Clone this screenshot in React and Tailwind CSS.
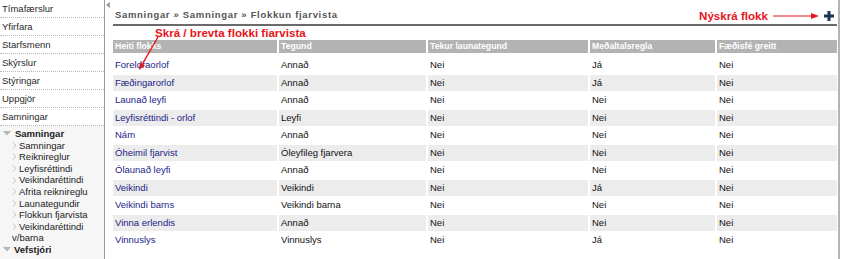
import React from "react";

const rows = [
  ["Foreldraorlof", "Annað", "Nei", "Já", "Nei"],
  ["Fæðingarorlof", "Annað", "Nei", "Já", "Nei"],
  ["Launað leyfi", "Annað", "Nei", "Nei", "Nei"],
  ["Leyfisréttindi - orlof", "Leyfi", "Nei", "Nei", "Nei"],
  ["Nám", "Annað", "Nei", "Nei", "Nei"],
  ["Óheimil fjarvist", "Óleyfileg fjarvera", "Nei", "Nei", "Nei"],
  ["Ólaunað leyfi", "Annað", "Nei", "Nei", "Nei"],
  ["Veikindi", "Veikindi", "Nei", "Já", "Nei"],
  ["Veikindi barns", "Veikindi barna", "Nei", "Nei", "Nei"],
  ["Vinna erlendis", "Annað", "Nei", "Nei", "Nei"],
  ["Vinnuslys", "Vinnuslys", "Nei", "Já", "Nei"],
];

const headers = ["Heiti flokks", "Tegund", "Tekur launategund", "Meðaltalsregla", "Fæðisfé greitt"];

const topItems = ["Tímafærslur", "Yfirfara", "Starfsmenn", "Skýrslur", "Stýringar", "Uppgjör", "Samningar"];
const children = [
  "Samningar",
  "Reiknireglur",
  "Leyfisréttindi",
  "Veikindaréttindi",
  "Afrita reiknireglu",
  "Launategundir",
  "Flokkun fjarvista",
  "Veikindaréttindi",
];

function Tri() {
  return (
    <svg width="8" height="5" viewBox="0 0 8 5" className="shrink-0">
      <polygon points="0,0 8,0 4,4.5" fill="#b5b5b5" />
    </svg>
  );
}

function Chev() {
  return (
    <svg width="5" height="7" viewBox="0 0 5 7" className="shrink-0">
      <polyline points="0.8,0.5 4,3.5 0.8,6.5" fill="none" stroke="#bdbdbd" strokeWidth="0.9" />
    </svg>
  );
}

export default function App() {
  return (
    <div className="flex w-[842px] h-[259px] overflow-hidden bg-white font-['Liberation_Sans',Arial,sans-serif] text-[9.5px] text-[#222]">
      {/* Sidebar */}
      <div className="w-[105px] shrink-0 border-r border-[#9a9a9a] flex flex-col">
        {topItems.map((t) => (
          <div key={t} className="h-[18px] border-b border-dotted border-[#b8b8b8] pl-[2px] flex items-center leading-none text-[#2a2a2a]">
            {t}
          </div>
        ))}
        <div className="flex-1 bg-[#f6f6f6] pt-[2px] leading-[11.6px]">
          <div className="flex items-center h-[11.6px] pl-[3px]">
            <Tri />
            <span className="ml-[4px] font-bold text-[#222]">Samningar</span>
          </div>
          {children.map((c, i) => (
            <div key={i} className="flex items-center h-[11.6px] pl-[12px]">
              <Chev />
              <span className="ml-[2px]">{c}</span>
            </div>
          ))}
          <div className="h-[11.6px] pl-[12px] flex items-center">v/barna</div>
          <div className="flex items-center h-[11.6px] pl-[3px]">
            <Tri />
            <span className="ml-[3px] font-bold text-[#222]">Vefstjóri</span>
          </div>
        </div>
      </div>

      {/* Main */}
      <div className="relative w-[735px] shrink-0 border-r-2 border-[#b4b4b4] pl-[8px]">
        {/* collapse arrow */}
        <svg width="4" height="6" viewBox="0 0 4 6" className="absolute left-[1px] top-[2px]">
          <polygon points="4,0 4,6 0,3" fill="#9a9a9a" />
        </svg>

        <div className="w-[724px]">
          <div className="mt-[9px] h-[13px] flex items-center justify-between">
            <div className="pl-[2px] font-bold text-[#555] tracking-[0.68px]">
              Samningar » Samningar » Flokkun fjarvista
            </div>
            <div className="flex items-center pr-[3px]">
              <span className="font-bold text-[11.6px] text-[#e8141c] leading-none">Nýskrá flokk</span>
              <svg width="46" height="8" viewBox="0 0 46 8" className="ml-[5px]">
                <line x1="0" y1="4" x2="40" y2="4" stroke="#e8141c" strokeWidth="1" />
                <polygon points="38,1 46,4 38,7" fill="#e8141c" />
              </svg>
              <svg width="10" height="10" viewBox="0 0 10 10" className="ml-[5px]">
                <rect x="3.5" y="0" width="3" height="10" fill="#1d3452" />
                <rect x="0" y="3.5" width="10" height="3" fill="#1d3452" />
              </svg>
            </div>
          </div>
          <div className="mt-[2px] h-[2px] bg-[#6a6a6a]" />

          <div className="h-[11px] pl-[42px] mt-0 mb-[3px]">
            <div className="font-bold text-[11.6px] leading-[14px] text-[#e8141c]">
              Skrá / brevta flokki fiarvista
            </div>
          </div>

          {/* Table */}
          <div className="grid grid-cols-[164px_147px_160px_125px_120px] gap-x-[2px] h-[13px]">
            {headers.map((h) => (
              <div key={h} className="bg-[#b3b3b3] text-white font-bold text-[8.7px] pl-[2px] flex items-center">
                {h}
              </div>
            ))}
          </div>
          <div className="mt-[4.5px] flex flex-col gap-y-[1.5px]">
            {rows.map((r, i) => (
              <div key={i} className="grid grid-cols-[164px_147px_160px_125px_120px] gap-x-[2px] h-[16px]">
                {r.map((c, j) => (
                  <div
                    key={j}
                    className={`${i % 2 === 1 ? "bg-[#ececec]" : "bg-white"} ${j === 0 ? "text-[#1c1c8a]" : "text-[#111]"} pl-[2px] flex items-center`}
                  >
                    {c}
                  </div>
                ))}
              </div>
            ))}
          </div>
        </div>

        {/* red annotation arrow */}
        <svg width="30" height="45" viewBox="0 0 30 45" className="absolute left-[30px] top-[30px] pointer-events-none">
          <line x1="23" y1="7" x2="7.5" y2="33.9" stroke="#e8141c" strokeWidth="1.4" />
          <polygon points="4,40 10.1,35.4 4.9,32.4" fill="#e8141c" />
        </svg>
      </div>
    </div>
  );
}
